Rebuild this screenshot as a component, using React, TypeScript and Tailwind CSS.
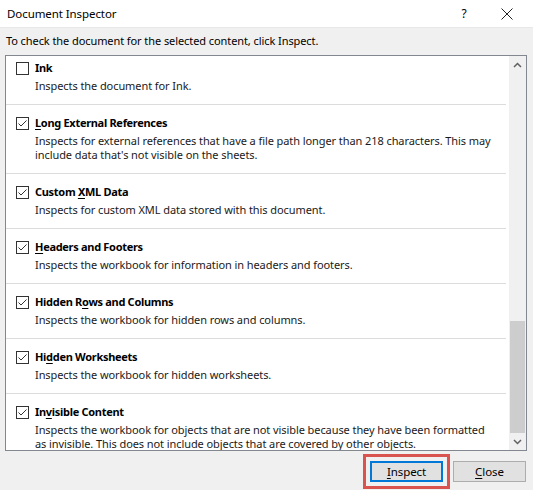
import React from "react";

type Item = {
  pre: string;
  u: string;
  post: string;
  desc: string[];
  checked: boolean;
};

const items: Item[] = [
  { pre: "", u: "", post: "Ink", desc: ["Inspects the document for Ink."], checked: false },
  {
    pre: "",
    u: "L",
    post: "ong External References",
    desc: [
      "Inspects for external references that have a file path longer than 218 characters. This may",
      "include data that's not visible on the sheets.",
    ],
    checked: true,
  },
  { pre: "Custom ", u: "X", post: "ML Data", desc: ["Inspects for custom XML data stored with this document."], checked: true },
  { pre: "", u: "H", post: "eaders and Footers", desc: ["Inspects the workbook for information in headers and footers."], checked: true },
  { pre: "Hidden R", u: "o", post: "ws and Columns", desc: ["Inspects the workbook for hidden rows and columns."], checked: true },
  { pre: "Hi", u: "d", post: "den Worksheets", desc: ["Inspects the workbook for hidden worksheets."], checked: true },
  {
    pre: "In",
    u: "v",
    post: "isible Content",
    desc: [
      "Inspects the workbook for objects that are not visible because they have been formatted",
      "as invisible. This does not include objects that are covered by other objects.",
    ],
    checked: true,
  },
];

function CheckBox({ checked }: { checked: boolean }) {
  return (
    <div className="w-[13px] h-[13px] border border-[#333333] bg-white flex items-center justify-center shrink-0">
      {checked && (
        <svg width="11" height="11" viewBox="0 0 11 11">
          <path d="M1.5 5.5 L4 8 L9.5 2.5" fill="none" stroke="#333333" strokeWidth="1" />
        </svg>
      )}
    </div>
  );
}

export default function App() {
  return (
    <div
      className="w-[533px] h-[490px] bg-[#f0f0f0] flex flex-col overflow-hidden text-[11px] tracking-[-0.08px] text-black"
      style={{ fontFamily: '"Noto Sans", "Open Sans", sans-serif' }}
    >
      {/* Title bar */}
      <div className="h-[28px] bg-white flex items-center border-b border-[#e8e8e8] shrink-0">
        <span className="pl-[7px] flex-1 text-[11.5px]">Document Inspector</span>
        <span className="w-[14px] text-center mr-[30px] text-[12px]">?</span>
        <svg width="12" height="12" viewBox="0 0 12 12" className="mr-[20px]">
          <path d="M0.5 0.5 L11.5 11.5 M11.5 0.5 L0.5 11.5" stroke="#222" strokeWidth="1" />
        </svg>
      </div>

      {/* Intro */}
      <div className="h-[27px] pl-[6px] flex items-center">
        To check the document for the selected content, click Inspect.
      </div>

      {/* List box */}
      <div className="ml-[5px] w-[522px] h-[396px] border border-[#828790] bg-white flex overflow-hidden">
        <div className="flex-1 overflow-hidden">
          <div className="-mt-[6px] mr-[3px]">
            {items.map((it, i) => (
              <div key={i} className="pt-[10px] pb-[11px] border-b border-[#dcdcdc] pl-[10px]">
                <div className="flex items-center h-[16px]">
                  <CheckBox checked={it.checked} />
                  <span className="ml-[6px] font-bold tracking-[-0.3px]">
                    {it.pre}
                    {it.u && <span className="underline underline-offset-2">{it.u}</span>}
                    {it.post}
                  </span>
                </div>
                <div className="mt-[3px] pl-[19px] text-[#1a1a1a]">
                  {it.desc.map((d, j) => (
                    <div key={j} className="whitespace-nowrap h-[14px] leading-[14px]">
                      {d}
                    </div>
                  ))}
                </div>
              </div>
            ))}
          </div>
        </div>
        {/* Scrollbar */}
        <div className="w-[17px] bg-[#f0f0f0] flex flex-col shrink-0">
          <div className="h-[17px] flex items-center justify-center">
            <svg width="9" height="6" viewBox="0 0 9 6">
              <path d="M1 5 L4.5 1.5 L8 5" fill="none" stroke="#606060" strokeWidth="1.5" />
            </svg>
          </div>
          <div className="flex-1 flex flex-col">
            <div className="h-[248px]" />
            <div className="h-[112px] bg-[#cdcdcd] mx-[1px]" />
          </div>
          <div className="h-[17px] flex items-center justify-center">
            <svg width="9" height="6" viewBox="0 0 9 6">
              <path d="M1 1 L4.5 4.5 L8 1" fill="none" stroke="#606060" strokeWidth="1.5" />
            </svg>
          </div>
        </div>
      </div>

      {/* Buttons */}
      <div className="flex justify-end items-center pr-[7px] pt-[3px] gap-[3px]">
        <div className="border-[3px] border-[#d9534f] p-[4px]">
          <div className="w-[73px] h-[21px] border-2 border-[#0078d7] bg-[#e1e1e1] flex items-center justify-center text-[11.5px]">
            <span>
              <span className="underline underline-offset-2">I</span>nspect
            </span>
          </div>
        </div>
        <div className="w-[73px] h-[21px] border border-[#adadad] bg-[#e1e1e1] flex items-center justify-center text-[11.5px]">
          <span>
            <span className="underline underline-offset-2">C</span>lose
          </span>
        </div>
      </div>
    </div>
  );
}
